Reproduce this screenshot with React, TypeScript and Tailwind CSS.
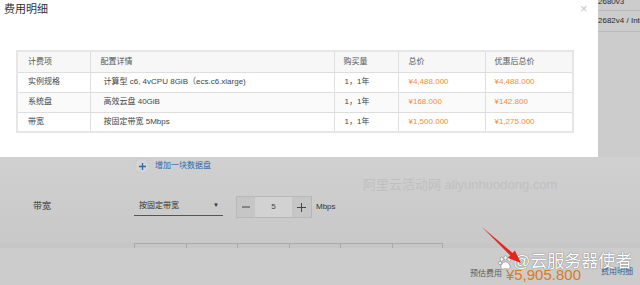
import React from 'react';

const FONT = { fontFamily: '"Liberation Sans", "Noto Sans CJK SC", sans-serif' };

const rows = [
  { item: '实例规格', detail: ' 计算型 c6, 4vCPU 8GiB（ecs.c6.xlarge)', qty: '1，1年', total: '¥4,488.000', final: '¥4,488.000' },
  { item: '系统盘', detail: ' 高效云盘 40GiB', qty: '1，1年', total: '¥168.000', final: '¥142.800' },
  { item: '带宽', detail: ' 按固定带宽 5Mbps', qty: '1，1年', total: '¥1,500.000', final: '¥1,275.000' },
];

const Paw: React.FC = () => (
  <svg width="15" height="15" viewBox="0 0 16 16">
    <g fill="#fff" stroke="#8a8a8a" strokeWidth="0.7">
      <ellipse cx="4" cy="4.5" rx="1.7" ry="2.2" />
      <ellipse cx="8" cy="3" rx="1.7" ry="2.2" />
      <ellipse cx="12" cy="4.5" rx="1.7" ry="2.2" />
      <ellipse cx="2.2" cy="8.6" rx="1.5" ry="1.9" />
      <path d="M8 7.2c2.6 0 5 3.4 5 5.6 0 1.6-1.4 2.2-2.6 2.2-1 0-1.6-.5-2.4-.5s-1.4.5-2.4.5C4.4 15 3 14.4 3 12.8c0-2.2 2.4-5.6 5-5.6z" />
    </g>
  </svg>
);

const FeeModal: React.FC = () => (
  <div className="absolute left-0 top-0 w-[598px] h-[157px] bg-white" style={FONT}>
    <div className="pl-[4px] pt-[2px] text-[11px] leading-[15px] text-[#333]">费用明细</div>
    <span className="absolute left-[580px] top-[3px] text-[13px] leading-[12px] text-[#c8c8c8] font-light">×</span>
    <table className="ml-[16px] mt-[33px] w-[556px] table-fixed border-collapse border-2 border-[#e6e6e6] text-[8px]">
      <colgroup>
        <col className="w-[73px]" />
        <col className="w-[244px]" />
        <col className="w-[64px]" />
        <col className="w-[87px]" />
        <col className="w-[88px]" />
      </colgroup>
      <thead>
        <tr className="h-[21px] bg-[#f7f7f7] text-[#555]">
          <td className="border border-[#dedede] pl-[10px]">计费项</td>
          <td className="border border-[#dedede] pl-[10px]">配置详情</td>
          <td className="border border-[#dedede] pl-[9px]">购买量</td>
          <td className="border border-[#dedede] pl-[10px]">总价</td>
          <td className="border border-[#dedede] pl-[9px]">优惠后总价</td>
        </tr>
      </thead>
      <tbody>
        {rows.map((r, i) => (
          <tr key={r.item} className={`h-[20px] ${i === 1 ? 'bg-[#fafafa]' : 'bg-white'}`}>
            <td className="border border-[#dedede] pl-[10px] text-[#444]">{r.item}</td>
            <td className="border border-[#dedede] pl-[13px] text-[#444] whitespace-nowrap">{r.detail}</td>
            <td className="border border-[#dedede] pl-[10px] text-[#444]">{r.qty}</td>
            <td className="border border-[#dedede] pl-[10px] text-[#fa8c35]">{r.total}</td>
            <td className="border border-[#dedede] pl-[9px] text-[#fa8c35]">{r.final}</td>
          </tr>
        ))}
      </tbody>
    </table>
  </div>
);

export default function App() {
  return (
    <div className="relative w-[640px] h-[285px] overflow-hidden bg-[#cccccc]" style={FONT}>
      {/* page behind the overlay */}
      <div className="flex flex-col">
        <div className="h-[157px] flex justify-end">
          <div className="w-[42px] text-[8px] text-[#2a2a2a] whitespace-nowrap overflow-hidden">
            <div className="h-[13px] border-b border-[#b9b9b9] leading-[8px] -mt-[2px] pt-0">2680v3</div>
            <div className="h-[21px] border-b border-[#b9b9b9] flex items-center">2682v4 / Intel</div>
          </div>
        </div>

        <div className="h-[91px] flex flex-col bg-gradient-to-b from-[#d0d0d0] to-[#c8c8c8]">
          <div className="mt-[2px] h-[14px] flex items-center pl-[135px]">
            <div className="w-[14px] h-[14px] rounded-full bg-[#d4d4d4] shadow-[0_0_2px_rgba(0,0,0,0.08)] flex items-center justify-center">
              <svg width="7" height="7" viewBox="0 0 7 7">
                <path d="M3.5 0v7M0 3.5h7" stroke="#2f68a8" strokeWidth="1.3" />
              </svg>
            </div>
            <span className="ml-[6px] text-[8px] text-[#2f68a8]">增加一块数据盘</span>
          </div>

          <div className="mt-[23px] h-[22px] flex items-center">
            <div className="w-[134px] pl-[33px] text-[9px] text-[#333]">带宽</div>
            <div className="w-[89px] h-[20px] self-start flex items-center justify-between pl-[5px] pr-[4px] border-b border-[#555] text-[8px] text-[#333]">
              <span>按固定带宽</span>
              <span className="text-[6px] text-[#333]">▼</span>
            </div>
            <div className="ml-[13px] w-[76px] h-[22px] flex border border-[#b8b8b8] text-[#444]">
              <div className="w-[18px] bg-[#c6c6c6] flex items-center justify-center">
                <svg width="8" height="8" viewBox="0 0 8 8"><path d="M0 4h8" stroke="#444" strokeWidth="1" /></svg>
              </div>
              <div className="flex-1 bg-[#d2d2d2] flex items-center justify-center text-[8px]">5</div>
              <div className="w-[19px] bg-[#c6c6c6] flex items-center justify-center">
                <svg width="9" height="9" viewBox="0 0 9 9"><path d="M4.5 0v9M0 4.5h9" stroke="#444" strokeWidth="1" /></svg>
              </div>
            </div>
            <span className="ml-[4px] text-[8px] text-[#333]">Mbps</span>
          </div>

          <div className="mt-[25px] h-[5px] flex pl-[134px] bg-[#c6c6c6]">
            {[0, 1, 2, 3, 4, 5].map((i) => (
              <div key={i} className={`w-[51.5px] h-[5px] border-l border-t border-[#aaaaaa] ${i === 5 ? 'border-r' : ''}`} />
            ))}
          </div>
        </div>

        <div className="h-[37px] flex items-end justify-end pr-[7px] pb-[2px] bg-[#cccccc]">
          <span className="text-[8px] text-[#5a5a5a] mb-[3px]">预估费用</span>
          <span className="ml-[4px] text-[15px] leading-[17px] text-[#d97a22]">¥5,905.800</span>
          <span className="ml-[20px] text-[8px] text-[#2d5e99] mb-[5px]">费用明细</span>
        </div>
      </div>

      {/* overlays */}
      <span className="absolute left-[363px] top-[176px] text-[13px] leading-[18px] text-[#c0c0c0] whitespace-nowrap">
        阿里云活动网 aliyunhuodong.com
      </span>

      <FeeModal />

      <div className="absolute left-[498px] top-[252px] flex items-center">
        <Paw />
        <span className="text-[17px] leading-[20px] text-white [text-shadow:0_0_1px_#777,0_0_1px_#777]">@云服务器使者</span>
      </div>

      <svg className="absolute left-0 top-0 pointer-events-none" width="640" height="285">
        <polygon
          points="482,227 510.2,255.5 508,257.9 521,263 514.8,250.5 512.6,252.9"
          fill="#e8251c"
        />
      </svg>
    </div>
  );
}
